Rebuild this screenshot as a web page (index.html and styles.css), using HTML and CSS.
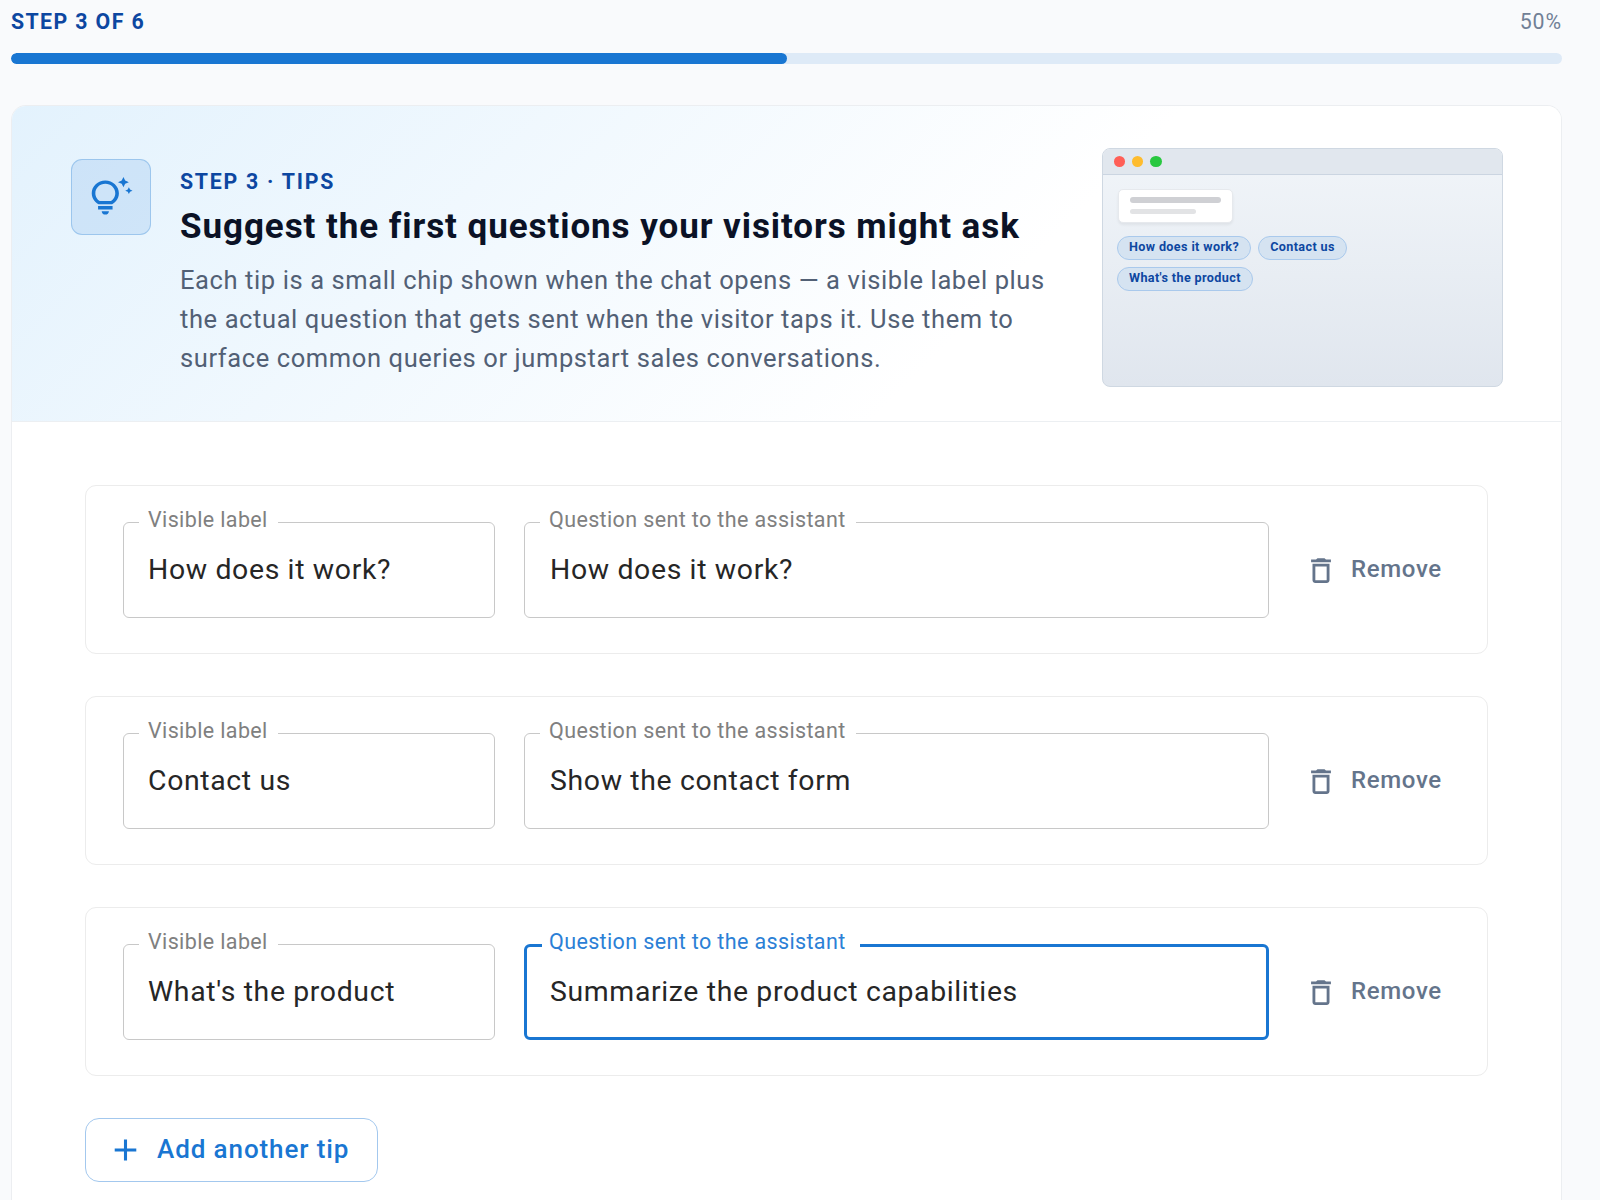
FILE: index.html
```
<!DOCTYPE html>
<html lang="en">
<head>
    <meta charset="UTF-8">
    <meta name="viewport" content="width=device-width, initial-scale=1.0">
    <title>Step 3 - Tips</title>
    <link rel="stylesheet" href="styles.css">
</head>
<body>
    <svg class="symbols" width="0" height="0">
        <symbol id="trash" viewBox="0 0 24 24" preserveAspectRatio="none">
            <path d="M6 19c0 1.1.9 2 2 2h8c1.1 0 2-.9 2-2V7H6v12zM8 9h8v10H8V9zm7.5-5l-1-1h-5l-1 1H5v2h14V4h-3.5z"/>
        </symbol>
    </svg>

    <div class="wizard">
        <div class="progress-head">
            <span class="progress-step">STEP 3 OF 6</span>
            <span class="progress-percent">50%</span>
        </div>
        <div class="progress">
            <div class="progress-fill" style="width: 50%"></div>
        </div>

        <div class="card">
            <div class="card-header">
                <div class="header-icon">
                    <svg viewBox="0 0 24 24" preserveAspectRatio="none">
                        <path d="M7 20h4c0 1.1-.9 2-2 2s-2-.9-2-2zm-2-1h8v-2H5v2zm11.5-9.5c0 3.82-2.66 5.86-3.77 6.5H5.27c-1.11-.64-3.77-2.68-3.77-6.5C1.5 5.36 4.86 2 9 2s7.5 3.36 7.5 7.5zm-2 0C14.5 6.47 12.03 4 9 4S3.5 6.47 3.5 9.5c0 2.47 1.49 3.89 2.35 4.5h6.3c.86-.61 2.35-2.03 2.35-4.5zm6.87-2.13L20 8l1.37.63L22 10l.63-1.37L24 8l-1.37-.63L22 6l-.63 1.37zM19 6l.94-2.06L22 3l-2.06-.94L19 0l-.94 2.06L16 3l2.06.94L19 6z"/>
                    </svg>
                </div>
                <div class="header-text">
                    <div class="eyebrow">STEP 3 · TIPS</div>
                    <h1>Suggest the first questions your visitors might ask</h1>
                    <p>Each tip is a small chip shown when the chat opens — a visible label plus the actual question that gets sent when the visitor taps it. Use them to surface common queries or jumpstart sales conversations.</p>
                </div>
                <div class="preview">
                    <div class="preview-bar">
                        <span class="dot red"></span>
                        <span class="dot yellow"></span>
                        <span class="dot green"></span>
                    </div>
                    <div class="preview-body">
                        <div class="bubble">
                            <div class="line"></div>
                            <div class="line short"></div>
                        </div>
                        <div class="chips">
                            <span class="chip">How does it work?</span>
                            <span class="chip">Contact us</span>
                            <span class="chip">What's the product</span>
                        </div>
                    </div>
                </div>
            </div>

            <div class="card-body">
                <div class="tip">
                    <div class="field label-field">
                        <label for="label1">Visible label</label>
                        <input type="text" id="label1" value="How does it work?">
                    </div>
                    <div class="field question-field">
                        <label for="question1">Question sent to the assistant</label>
                        <input type="text" id="question1" value="How does it work?">
                    </div>
                    <button class="remove"><svg><use href="#trash"/></svg><span>Remove</span></button>
                </div>
                <div class="tip">
                    <div class="field label-field">
                        <label for="label2">Visible label</label>
                        <input type="text" id="label2" value="Contact us">
                    </div>
                    <div class="field question-field">
                        <label for="question2">Question sent to the assistant</label>
                        <input type="text" id="question2" value="Show the contact form">
                    </div>
                    <button class="remove"><svg><use href="#trash"/></svg><span>Remove</span></button>
                </div>
                <div class="tip">
                    <div class="field label-field">
                        <label for="label3">Visible label</label>
                        <input type="text" id="label3" value="What's the product">
                    </div>
                    <div class="field question-field active">
                        <label for="question3">Question sent to the assistant</label>
                        <input type="text" id="question3" value="Summarize the product capabilities">
                    </div>
                    <button class="remove"><svg><use href="#trash"/></svg><span>Remove</span></button>
                </div>
                <button class="add">
                    <svg viewBox="0 0 24 24" preserveAspectRatio="none"><path d="M19 13h-6v6h-2v-6H5v-2h6V5h2v6h6v2z"/></svg>
                    <span>Add another tip</span>
                </button>
            </div>
        </div>
    </div>
</body>
</html>
```
FILE: styles.css
```
* {
    box-sizing: border-box;
}
body {
    margin: 0;
    background: #f9fafc;
    font-family: Roboto, sans-serif;
}
svg {
    display: block;
    fill: currentColor;
    flex-shrink: 0;
}
.symbols {
    position: absolute;
}
.wizard {
    display: flex;
    flex-direction: column;
    width: 1551px;
    height: 100vh;
    margin-left: 11px;
    padding-top: 9px;
}

/* progress */
.progress-head {
    display: flex;
    justify-content: space-between;
    font-size: 21.3px;
    line-height: 26px;
}
.progress-step {
    font-weight: 700;
    letter-spacing: 1.4px;
    color: #0d47a1;
}
.progress-percent {
    letter-spacing: 0.9px;
    color: #718096;
}
.progress {
    margin-top: 18px;
    height: 11px;
    border-radius: 6px;
    background: #deeaf7;
    overflow: hidden;
}
.progress-fill {
    height: 100%;
    border-radius: 6px;
    background: #1976d2;
}

/* card */
.card {
    flex: 1;
    margin-top: 41px;
    border: 1px solid #eceef1;
    border-bottom: none;
    border-radius: 15px 15px 0 0;
    background: #fff;
    overflow: hidden;
}
.card-header {
    display: flex;
    align-items: flex-start;
    height: 316px;
    padding: 42px 58px 0 59px;
    border-bottom: 1px solid #eceff2;
    background: linear-gradient(135deg, #e3f2fd 0%, #fff 63%);
}
.header-icon {
    display: flex;
    align-items: center;
    justify-content: center;
    width: 80px;
    height: 76px;
    margin-top: 11px;
    border: 1px solid rgba(25, 118, 210, 0.28);
    border-radius: 11px;
    background: rgba(25, 118, 210, 0.12);
    color: #1976d2;
    flex-shrink: 0;
}
.header-icon svg {
    width: 43.5px;
    height: 41px;
}
.header-text {
    width: 880px;
    margin-left: 29px;
    padding-top: 21px;
    flex-shrink: 0;
}
.eyebrow {
    font-size: 21.3px;
    line-height: 26px;
    font-weight: 700;
    letter-spacing: 1.75px;
    color: #0d47a1;
}
h1 {
    margin: 12px 0 14px;
    font-size: 35px;
    line-height: 40px;
    font-weight: 700;
    letter-spacing: 0.93px;
    color: #0b1226;
}
p {
    margin: 0;
    font-size: 25.5px;
    line-height: 38.8px;
    letter-spacing: 0.6px;
    color: #526075;
}

/* preview window */
.preview {
    width: 401px;
    height: 239px;
    margin-left: auto;
    display: flex;
    flex-direction: column;
    border: 1px solid #cfd8e2;
    border-radius: 8px;
    background: linear-gradient(180deg, #f1f5f9, #e0e6ee);
    overflow: hidden;
}
.preview-bar {
    display: flex;
    align-items: center;
    gap: 6.8px;
    height: 26px;
    padding: 0 0 0 10.5px;
    border-bottom: 1px solid #cbd5e1;
    background: #e1e7ee;
}
.dot {
    width: 11.5px;
    height: 11px;
    border-radius: 50%;
}
.red {
    background: #ff5f57;
}
.yellow {
    background: #febc2e;
}
.green {
    background: #28c840;
}
.preview-body {
    padding: 14px;
}
.bubble {
    width: 115px;
    height: 34px;
    margin-left: 1px;
    padding: 7px 11px;
    border: 1px solid #e6e9ed;
    border-radius: 5px;
    background: #fff;
    box-shadow: 0 2px 3px rgba(0, 0, 0, 0.06);
}
.line {
    width: 91px;
    height: 6px;
    border-radius: 3px;
    background: #cfd0d4;
}
.line.short {
    width: 66px;
    height: 5px;
    margin-top: 6px;
    background: #e2e3e5;
}
.chips {
    display: flex;
    flex-wrap: wrap;
    gap: 7px;
    margin-top: 13px;
    width: 250px;
}
.chip {
    height: 24px;
    padding: 0 11px;
    border: 1px solid #a9c9ec;
    border-radius: 12px;
    background: #d5e3f1;
    font-size: 12.6px;
    line-height: 20px;
    font-weight: 700;
    letter-spacing: 0.38px;
    color: #0d47a1;
}

/* tips */
.card-body {
    display: flex;
    flex-direction: column;
    align-items: flex-start;
    gap: 42px;
    padding: 63px 73px 0;
}
.tip {
    display: flex;
    align-items: center;
    width: 1403px;
    height: 169px;
    padding: 1px 0 0 37px;
    border: 1px solid #ececec;
    border-radius: 11px;
}
.field {
    position: relative;
    height: 96px;
    margin-right: 29px;
}
.label-field {
    width: 372px;
}
.question-field {
    width: 745px;
}
.field input {
    width: 100%;
    height: 100%;
    padding: 0 24px 1px;
    border: 1px solid #c8c8c8;
    border-radius: 6px;
    background: transparent;
    font-family: inherit;
    font-size: 28.4px;
    letter-spacing: 0.65px;
    color: #262626;
    outline: none;
}
.question-field input {
    padding-left: 25px;
}
.field label {
    position: absolute;
    top: -14px;
    left: 16px;
    padding: 0 10px 0 9px;
    background: #fff;
    font-size: 21.5px;
    line-height: 24px;
    letter-spacing: 0.37px;
    color: #808080;
}
.field.active input {
    padding: 0 22px 1px 23px;
    border: 3px solid #1976d2;
}
.field.active label {
    left: 18px;
    padding: 0 14px 0 7px;
    color: #2b80d6;
}
button {
    display: flex;
    align-items: center;
    padding: 0;
    border: none;
    background: none;
    font-family: inherit;
    font-weight: 500;
    cursor: pointer;
}
.remove {
    gap: 13px;
    margin-left: 6px;
    font-size: 24px;
    line-height: 28px;
    letter-spacing: 0.65px;
    color: #64748b;
}
.remove svg {
    width: 34px;
    height: 33px;
}
.remove span {
    padding-bottom: 2px;
}
.add {
    gap: 13px;
    width: 293px;
    height: 64px;
    padding-left: 21px;
    border: 1px solid #a3c8ee;
    border-radius: 14px;
    font-size: 26px;
    line-height: 30px;
    letter-spacing: 0.9px;
    color: #1976d2;
}
.add svg {
    width: 37px;
    height: 36px;
}
.add span {
    padding-bottom: 2px;
}
```
